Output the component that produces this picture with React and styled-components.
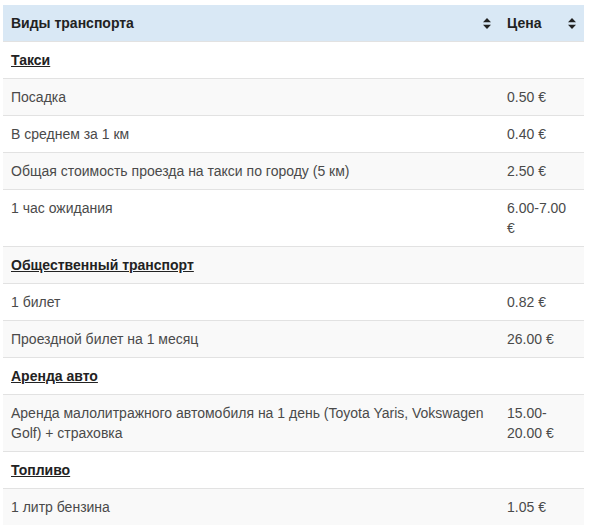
import React from "react";
import styled, { createGlobalStyle } from "styled-components";

const rows = [
  { category: "Такси" },
  { name: "Посадка", price: "0.50 €" },
  { name: "В среднем за 1 км", price: "0.40 €" },
  { name: "Общая стоимость проезда на такси по городу (5 км)", price: "2.50 €" },
  { name: "1 час ожидания", price: "6.00-7.00 €" },
  { category: "Общественный транспорт" },
  { name: "1 билет", price: "0.82 €" },
  { name: "Проездной билет на 1 месяц", price: "26.00 €" },
  { category: "Аренда авто" },
  {
    name: "Аренда малолитражного автомобиля на 1 день (Toyota Yaris, Vokswagen Golf) + страховка",
    price: "15.00-20.00 €",
  },
  { category: "Топливо" },
  { name: "1 литр бензина", price: "1.05 €" },
];

const SortIcon = () => (
  <SortGlyph viewBox="0 0 8 11" aria-hidden="true">
    <path d="M4 0 L8 4.3 H0 Z" />
    <path d="M0 6.7 H8 L4 11 Z" />
  </SortGlyph>
);

const App = () => (
  <>
    <GlobalStyle />
    <Table>
      <colgroup>
        <col style={{ width: 496 }} />
        <col style={{ width: 85 }} />
      </colgroup>
      <thead>
        <tr>
          <HeadCell>
            Виды транспорта
            <SortIcon />
          </HeadCell>
          <HeadCell>
            Цена
            <SortIcon />
          </HeadCell>
        </tr>
      </thead>
      <tbody>
        {rows.map((row, i) => (
          <Row key={i}>
            {row.category ? (
              <>
                <Cell>
                  <Category>{row.category}</Category>
                </Cell>
                <Cell />
              </>
            ) : (
              <>
                <Cell>{row.name}</Cell>
                <Cell>{row.price}</Cell>
              </>
            )}
          </Row>
        ))}
      </tbody>
    </Table>
  </>
);

export default App;

const GlobalStyle = createGlobalStyle`
  body {
    margin: 0;
    padding: 5px 0 0 3px;
    background: #fff;
    font-family: "Liberation Sans", Arial, sans-serif;
    font-size: 14px;
    color: #4a4a4a;
  }
`;

const Table = styled.table`
  width: 581px;
  table-layout: fixed;
  border-collapse: collapse;
  border-spacing: 0;
  line-height: 20px;
`;

const HeadCell = styled.th`
  position: relative;
  background: #d9e8f5;
  color: #222;
  font-weight: bold;
  text-align: left;
  padding: 8px 30px 8px 8px;
`;

const SortGlyph = styled.svg`
  position: absolute;
  right: 8px;
  top: 13px;
  width: 8px;
  height: 11px;
  fill: #222;
`;

const Row = styled.tr`
  background: #fff;

  &:nth-child(even) {
    background: #f9f9f9;
  }
`;

const Cell = styled.td`
  padding: 8px;
  vertical-align: top;
  border-top: 1px solid #e2e2e2;
`;

const Category = styled.span`
  font-weight: bold;
  text-decoration: underline;
  color: #222;
`;
